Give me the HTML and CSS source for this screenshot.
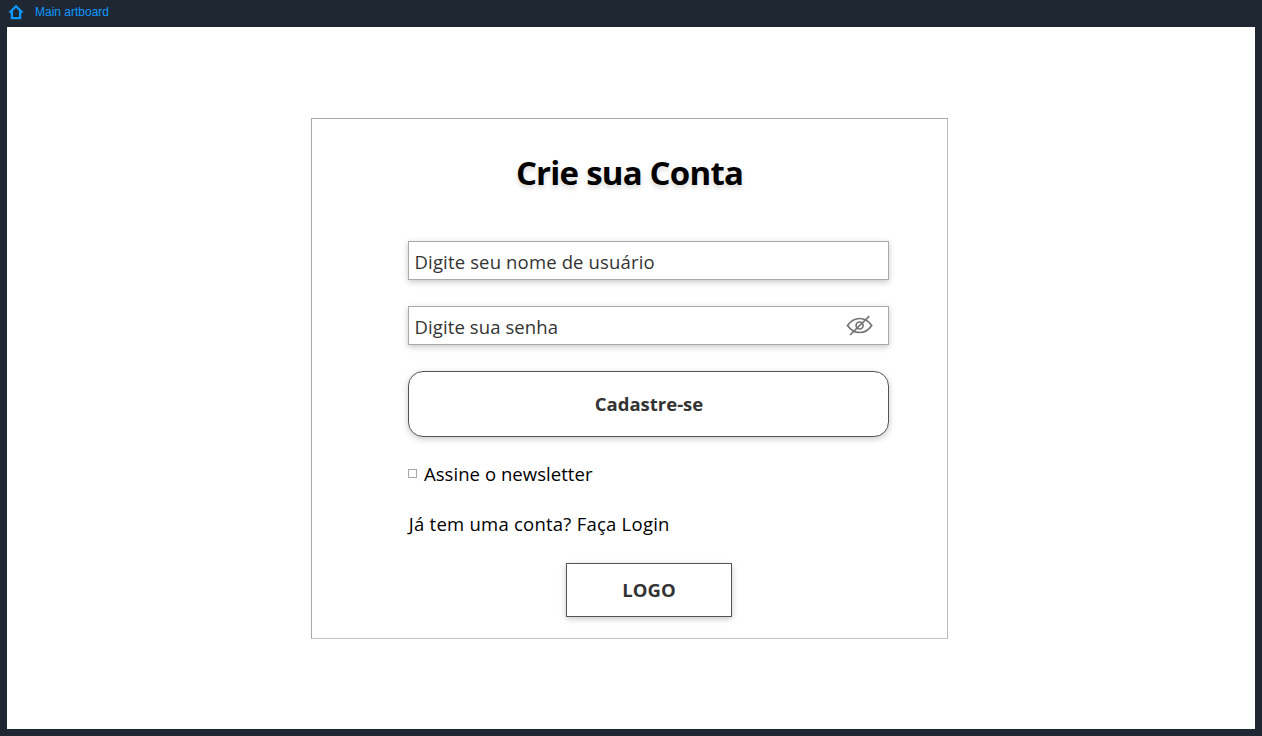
FILE: index.html
```html
<!DOCTYPE html>
<html lang="pt-BR">
<head>
<meta charset="utf-8">
<title>Main artboard</title>
<link rel="stylesheet" href="styles.css">
</head>
<body>
<header class="topbar">
  <svg class="home" width="16" height="16" viewBox="0 0 16 16"><path d="M1.600 8.600 8 2.200l6.400 6.400M3.900 7.300v6.900h8.200V7.300" fill="none" stroke="#0d99ff" stroke-width="2.200"/></svg>
  <span class="crumb">Main artboard</span>
</header>
<main class="artboard">
  <section class="card">
    <h1 class="title"><span class="t-title">Crie sua Conta</span></h1>
    <form class="form">
      <div class="field"><span class="t-user">Digite seu nome de usuário</span></div>
      <div class="field"><span class="t-pass">Digite sua senha</span>
        <svg class="eye" width="28" height="22" viewBox="0 0 28 22" fill="none" stroke="#747474" stroke-width="1.700"><path d="M2.500 11.500Q7.500 4.500 14.700 4.500T26.700 11.500Q22 18.500 14.700 18.500T2.500 11.500Z"/><circle cx="14.600" cy="11.500" r="3.500"/><path d="M5 21 24.300 2.200"/></svg>
      </div>
      <button class="submit" type="button"><span class="t-submit">Cadastre-se</span></button>
      <label class="news"><span class="box"></span><span class="t-news">Assine o newsletter</span></label>
      <p class="login"><span class="t-login">Já tem uma conta? Faça Login</span></p>
      <div class="logo"><span class="t-logo">LOGO</span></div>
    </form>
  </section>
</main>
</body>
</html>
```
FILE: styles.css
```css
* { box-sizing: border-box; }
body { margin: 0; width: 1262px; height: 736px; overflow: hidden; background: #1f2733; font-family: "Open Sans", "Noto Sans", sans-serif; }
.topbar { display: flex; align-items: center; height: 27px; padding: 0 8px 3px; gap: 11px; }
.home { display: block; }
.crumb { font: 12px/16px "Liberation Sans", Arial, sans-serif; color: #0d99ff; }
.artboard { width: 1248px; height: 702px; margin-left: 7px; padding: 91px 0 0 304px; background: #fff; }
.card { width: 637px; height: 521px; border: 1px solid #a9a9a9; border-right-color: #bbb; border-bottom-color: #c4c4c4; }
.title { margin: 0; padding-top: 32px; height: 122px; text-align: center; font-size: 33px; line-height: 44px; font-weight: 700; color: #000; text-shadow: 0 3px 5px rgba(0,0,0,.16); }
.t-title { letter-spacing: -.78px; }
.form { display: flex; flex-direction: column; width: 481px; margin-left: 96px; font-size: 18.500px; line-height: 26px; color: #333; }
.form span { white-space: nowrap; }
.field { display: flex; align-items: center; justify-content: space-between; height: 39px; margin-bottom: 26px; padding: 3px 15px 0 5.500px; border: 1px solid #a9a9a9; background: #fff; box-shadow: 0 2px 6px rgba(0,0,0,.22); }
.t-user { letter-spacing: .15px; }
.t-pass { letter-spacing: .1px; }
.eye { display: block; margin-top: -4px; }
.submit { height: 66px; padding: 0 0 1px; border: 1px solid #555; border-radius: 15px; background: #fff; font: inherit; font-weight: 700; color: #333; box-shadow: 0 2px 6px rgba(0,0,0,.22); }
.t-submit { margin-left: 1px; }
.news { display: flex; align-items: center; height: 26px; margin-top: 24px; gap: 7px; color: #000; }
.t-news { letter-spacing: .05px; }
.box { width: 9px; height: 9px; margin-top: -1px; border: 1px solid #a9a9a9; }
.login { margin: 24px 0 0 .8px; color: #000; }
.t-login { letter-spacing: .24px; }
.logo { display: flex; align-items: center; justify-content: center; align-self: flex-start; width: 166px; height: 54px; margin: 26px 0 0 158px; border: 1px solid #555; font-weight: 700; background: #fff; box-shadow: 0 2px 6px rgba(0,0,0,.22); }
```
